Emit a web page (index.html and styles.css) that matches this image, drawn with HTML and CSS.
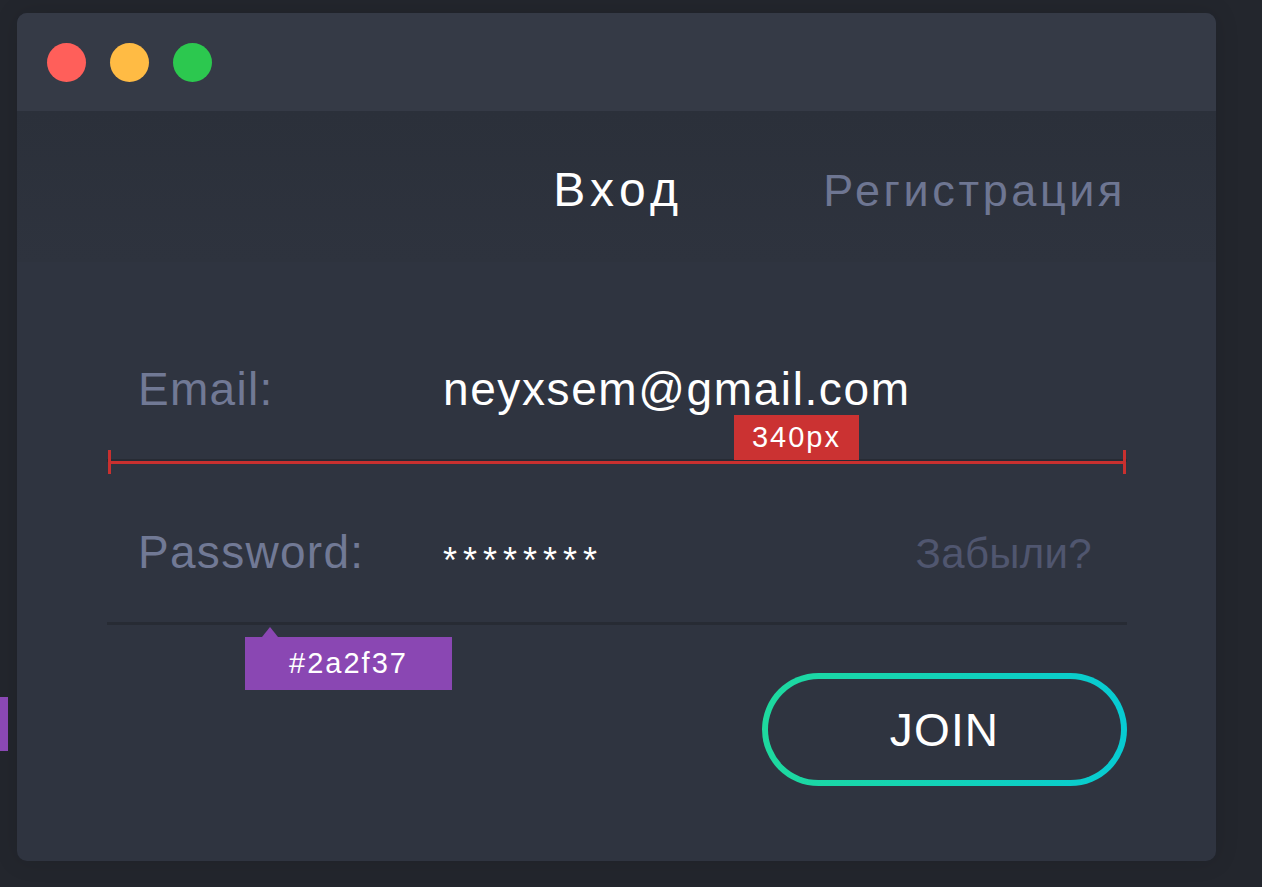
FILE: index.html
```html
<!DOCTYPE html>
<html lang="ru">
<head>
<meta charset="utf-8">
<title>Login</title>
<link rel="stylesheet" href="styles.css">
</head>
<body>
<div class="side-mark"></div>
<div class="window">
  <div class="titlebar">
    <span class="dot dot-red"></span>
    <span class="dot dot-yellow"></span>
    <span class="dot dot-green"></span>
  </div>
  <div class="tabs">
    <span class="tab tab-active">Вход</span>
    <span class="tab">Регистрация</span>
  </div>
  <form class="form">
    <div class="row">
      <span class="label">Email:</span>
      <span class="value">neyxsem@gmail.com</span>
      <div class="measure-tag">340px</div>
      <div class="measure"><span class="tick"></span><span class="mline"></span><span class="tick"></span></div>
    </div>
    <div class="row">
      <span class="label">Password:</span>
      <span class="value stars">********</span>
      <span class="forgot">Забыли?</span>
      <div class="color-tip">#2a2f37</div>
    </div>
    <div class="actions">
      <button type="button" class="join">JOIN</button>
    </div>
  </form>
</div>
</body>
</html>
```
FILE: styles.css
```css
html, body {
  margin: 0;
  padding: 0;
}
body {
  background: #23262d;
  font-family: "Liberation Sans", Arial, sans-serif;
  padding: 13px 0 0 17px;
  position: relative;
  height: 887px;
  box-sizing: border-box;
  overflow: hidden;
}
.side-mark {
  position: absolute;
  left: 0;
  top: 697px;
  width: 8px;
  height: 54px;
  background: #8a48b4;
}
.window {
  width: 1199px;
  height: 848px;
  border-radius: 10px;
  background: #2f3440;
  overflow: hidden;
  display: flex;
  flex-direction: column;
  box-shadow: 0 0 24px rgba(0, 0, 0, 0.12);
}
.titlebar {
  height: 98px;
  flex: none;
  background: #353a46;
  display: flex;
  align-items: center;
  gap: 24px;
  padding-left: 30px;
}
.dot {
  width: 39px;
  height: 39px;
  border-radius: 50%;
}
.dot-red { background: #ff5f5a; }
.dot-yellow { background: #ffbb44; }
.dot-green { background: #2cc84f; }

.tabs {
  height: 151px;
  box-sizing: border-box;
  flex: none;
  background: linear-gradient(#2b303a, #2e333e);
  display: flex;
  justify-content: flex-end;
  align-items: baseline;
  gap: 140px;
  padding: 55px 90px 0 0;
}
.tab {
  font-size: 45px;
  line-height: 48px;
  letter-spacing: 3.6px;
  color: #6e7692;
}
.tab-active {
  font-size: 48px;
  color: #ffffff;
  letter-spacing: 5.4px;
}

.form {
  flex: 1;
  margin: 0;
  padding: 37px 89px 0 90px;
  display: flex;
  flex-direction: column;
}
.row {
  position: relative;
  height: 163px;
  box-sizing: border-box;
  padding: 67px 35px 0 31px;
  border-bottom: 3px solid #272b34;
  display: flex;
  align-items: baseline;
  font-size: 46px;
  line-height: 46px;
}
.label {
  width: 305px;
  flex: none;
  color: #717995;
  letter-spacing: 1.3px;
}
.value {
  color: #ffffff;
  letter-spacing: 1.6px;
}
.stars {
  position: relative;
  top: 5px;
  font-size: 36px;
  letter-spacing: 6px;
}
.forgot {
  margin-left: auto;
  color: #50566f;
  font-size: 42px;
  letter-spacing: 0.3px;
}

.measure {
  position: absolute;
  left: 1px;
  right: 1px;
  top: 151px;
  height: 24px;
  display: flex;
  align-items: center;
}
.tick {
  width: 3px;
  height: 24px;
  background: #c9302f;
  flex: none;
}
.mline {
  flex: 1;
  height: 3px;
  background: #c9302f;
}
.measure-tag {
  position: absolute;
  left: 627px;
  top: 116px;
  width: 125px;
  height: 45px;
  background: #cb3232;
  color: #ffffff;
  font-size: 29px;
  line-height: 45px;
  letter-spacing: 2px;
  text-align: center;
}

.color-tip {
  position: absolute;
  left: 138px;
  top: 175px;
  width: 207px;
  height: 53px;
  background: #8a47b3;
  color: #ffffff;
  font-size: 29px;
  line-height: 53px;
  letter-spacing: 2px;
  text-align: center;
}
.color-tip::before {
  content: "";
  position: absolute;
  left: 17px;
  top: -10px;
  border-left: 8px solid transparent;
  border-right: 8px solid transparent;
  border-bottom: 10px solid #8a47b3;
}

.actions {
  display: flex;
  justify-content: flex-end;
  margin-top: 48px;
}
.join {
  width: 365px;
  height: 113px;
  border: 6px solid transparent;
  border-radius: 60px;
  background:
    linear-gradient(#2f3440, #2f3440) padding-box,
    linear-gradient(90deg, #1ed99e, #07cbd3) border-box;
  color: #ffffff;
  font-family: "Liberation Sans", Arial, sans-serif;
  font-size: 46px;
  letter-spacing: 1.2px;
  padding: 0;
  cursor: pointer;
}
```
